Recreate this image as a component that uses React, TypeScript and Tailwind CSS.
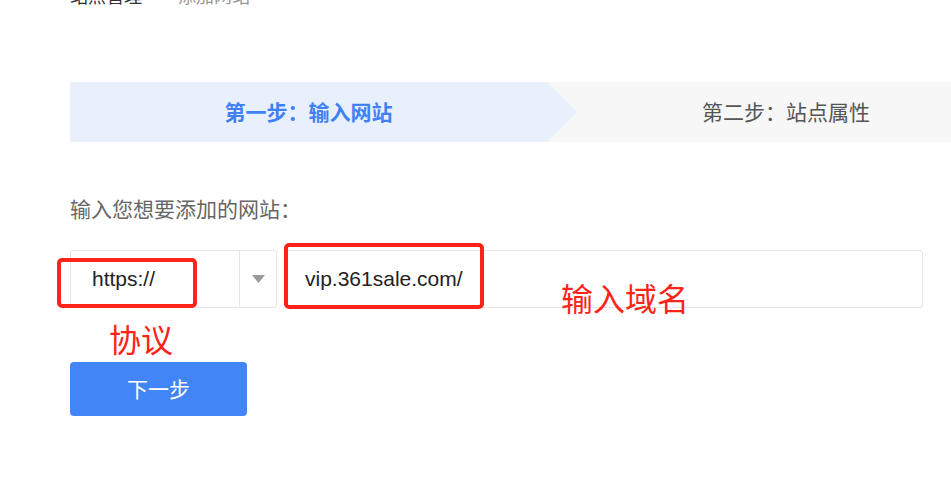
import React from "react";

const cjk = "font-['Microsoft_YaHei','Noto_Sans_CJK_SC',sans-serif]";
const latin = "font-['Liberation_Sans','Noto_Sans_CJK_SC',sans-serif]";

const App: React.FC = () => {
  return (
    <div className={`relative w-[951px] h-[484px] overflow-hidden bg-white ${cjk}`}>
      <div className="pl-[70px]">
        {/* breadcrumb, mostly scrolled out of view */}
        <div className="-mt-[14px] flex items-center gap-[36px] text-[18px] leading-[18px]">
          <span className="text-[#333]">站点管理</span>
          <span className="text-[#999]">添加网站</span>
        </div>

        {/* steps */}
        <div className="mt-[78px] flex h-[60px] w-[955px] bg-[#f7f7f7]">
          <div className="flex h-full w-[507px] shrink-0 items-center bg-[#e9f0fd] [clip-path:polygon(0_0,477px_0,507px_50%,477px_100%,0_100%)]">
            <span className="w-[477px] text-center text-[21px] font-bold text-[#3f80f5]">第一步：输入网站</span>
          </div>
          <div className="-ml-[30px] flex h-full flex-1 items-center justify-center">
            <span className="text-[21px] text-[#555]">第二步：站点属性</span>
          </div>
        </div>

        <p className="mt-[56px] text-[21px] leading-[21px] text-[#666]">输入您想要添加的网站：</p>

        {/* protocol + domain */}
        <div className="mt-[31px] flex h-[58px] w-[853px] gap-[8px]">
          <div className="flex w-[207px] shrink-0 rounded-[3px] border border-[#e6e6e6]">
            <div className={`flex flex-1 items-center pl-[21px] text-[21px] text-[#222] ${latin}`}>https://</div>
            <div className="flex w-[37px] items-center justify-center border-l border-[#e6e6e6]">
              <svg width="13" height="8" viewBox="0 0 13 8">
                <path d="M0 0 H13 L6.5 8 Z" fill="#9a9a9a" />
              </svg>
            </div>
          </div>
          <div className={`flex flex-1 items-center rounded-[3px] border border-[#e6e6e6] pl-[19px] text-[21px] text-[#222] ${latin}`}>
            vip.361sale.com/
          </div>
        </div>

        <button className="mt-[54px] flex h-[54px] w-[177px] items-center justify-center rounded-[4px] bg-[#4285f6] text-[21px] text-white">
          下一步
        </button>
      </div>

      {/* annotations */}
      <div className="absolute left-[57px] top-[258px] h-[50px] w-[140px] rounded-[5px] border-[4px] border-[#ff2318]" />
      <div className="absolute left-[284px] top-[243px] h-[66px] w-[200px] rounded-[5px] border-[4px] border-[#ff2318]" />
      <div className="absolute left-[109px] top-[318px] text-[32px] leading-[40px] text-[#ff2318]">协议</div>
      <div className="absolute left-[561px] top-[277px] text-[32px] leading-[40px] text-[#ff2318]">输入域名</div>
    </div>
  );
};

export default App;
